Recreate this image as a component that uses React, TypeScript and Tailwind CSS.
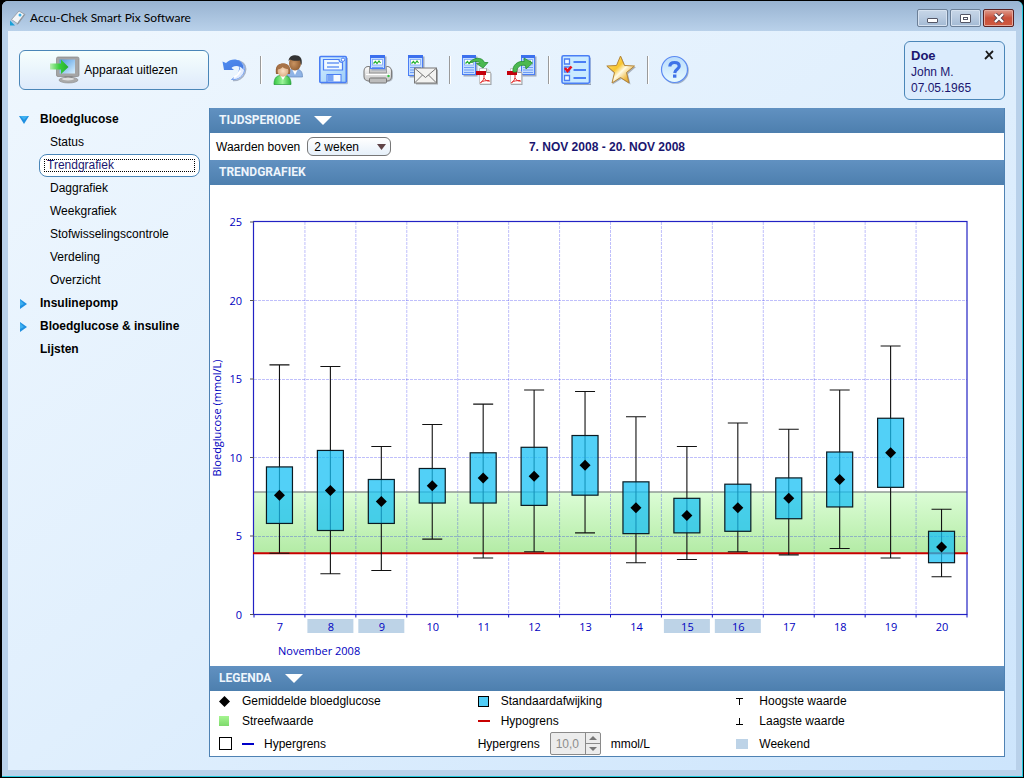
import React, { useState } from "react";

type Day = {
  day: number;
  mean: number;
  low: number;
  high: number;
  min: number;
  max: number;
  weekend?: boolean;
};

const days: Day[] = [
  { day: 7, mean: 7.6, low: 5.8, high: 9.4, min: 3.9, max: 15.9 },
  { day: 8, mean: 7.9, low: 5.35, high: 10.45, min: 2.6, max: 15.8, weekend: true },
  { day: 9, mean: 7.2, low: 5.8, high: 8.6, min: 2.8, max: 10.7, weekend: true },
  { day: 10, mean: 8.2, low: 7.1, high: 9.3, min: 4.8, max: 12.1 },
  { day: 11, mean: 8.7, low: 7.1, high: 10.3, min: 3.6, max: 13.4 },
  { day: 12, mean: 8.8, low: 6.95, high: 10.65, min: 4.0, max: 14.3 },
  { day: 13, mean: 9.5, low: 7.6, high: 11.4, min: 5.2, max: 14.2 },
  { day: 14, mean: 6.8, low: 5.15, high: 8.45, min: 3.3, max: 12.6 },
  { day: 15, mean: 6.3, low: 5.2, high: 7.4, min: 3.5, max: 10.7, weekend: true },
  { day: 16, mean: 6.8, low: 5.3, high: 8.3, min: 4.0, max: 12.2, weekend: true },
  { day: 17, mean: 7.4, low: 6.1, high: 8.7, min: 3.8, max: 11.8 },
  { day: 18, mean: 8.6, low: 6.85, high: 10.35, min: 4.2, max: 14.3 },
  { day: 19, mean: 10.3, low: 8.1, high: 12.5, min: 3.6, max: 17.1 },
  { day: 20, mean: 4.3, low: 3.3, high: 5.3, min: 2.4, max: 6.7 },
];

const reports = [
  "Status",
  "Trendgrafiek",
  "Daggrafiek",
  "Weekgrafiek",
  "Stofwisselingscontrole",
  "Verdeling",
  "Overzicht",
];

/* ---------- Chart ---------- */

const LEFT = 44;
const RIGHT = 757;
const BOTTOM = 428.5;
const STEP = (RIGHT - LEFT) / days.length;
const y = (v: number) => BOTTOM - v * 15.7;

function TrendChart() {
  return (
    <svg viewBox="0 0 794 480" className="block w-full" role="img" aria-label="Trendgrafiek">
      <defs>
        <linearGradient id="target" x1="0" y1="0" x2="0" y2="1">
          <stop offset="0" stopColor="#dcfdd6" />
          <stop offset="1" stopColor="#b3eba5" />
        </linearGradient>
      </defs>

      {/* Target range */}
      <rect x={LEFT} y={y(7.8)} width={RIGHT - LEFT} height={y(3.9) - y(7.8)} fill="url(#target)" />

      {/* Grid */}
      {[5, 10, 15, 20].map((v) => (
        <line key={v} x1={LEFT} x2={RIGHT} y1={Math.floor(y(v)) + 0.5} y2={Math.floor(y(v)) + 0.5} stroke="#0000f0" strokeOpacity="0.25" strokeDasharray="3 1" />
      ))}
      {days.slice(1).map((d, i) => (
        <line key={d.day} x1={LEFT + STEP * (i + 1)} x2={LEFT + STEP * (i + 1)} y1={y(25)} y2={BOTTOM} stroke="#0000f0" strokeOpacity="0.25" strokeDasharray="3 1" />
      ))}
      <line x1={LEFT} x2={RIGHT} y1={y(7.8)} y2={y(7.8)} stroke="#8f9a94" strokeWidth="1.4" />

      {/* Axes */}
      <rect x={LEFT - 0.5} y={y(25) - 0.5} width={RIGHT - LEFT + 0.5} height={BOTTOM - y(25) + 0.5} fill="none" stroke="#2222c4" strokeWidth="1.2" />
      {[0, 5, 10, 15, 20, 25].map((v) => (
        <g key={v}>
          <line x1={LEFT - 4} x2={LEFT} y1={y(v)} y2={y(v)} stroke="#555" />
          <text x="32" y={y(v) + 4} textAnchor="end" fontSize="11" fill="#0000c0">
            {v}
          </text>
        </g>
      ))}
      {days.concat(days[0]).map((_, i) => (
        <line key={i} x1={LEFT + STEP * i} x2={LEFT + STEP * i} y1={BOTTOM} y2={BOTTOM + 3} stroke="#1111c8" />
      ))}
      <line x1={LEFT - 1} x2={RIGHT + 1} y1={y(3.9)} y2={y(3.9)} stroke="#c80000" strokeWidth="2.2" />

      {/* Days */}
      {days.map((d, i) => {
        const cx = LEFT + STEP * (i + 0.5);
        return (
          <g key={d.day}>
            {d.weekend && <rect x={cx - 23} y="433" width="46" height="14" fill="#bdd3e7" />}
            <text x={cx + 0.5} y="445" textAnchor="middle" fontSize="11" fill="#0000c0">
              {d.day}
            </text>
            <path
              d={`M${cx} ${y(d.max)}V${y(d.min)}M${cx - 10} ${y(d.max)}h20M${cx - 10} ${y(d.min)}h20`}
              stroke="#111"
              strokeWidth="1.1"
              fill="none"
            />
            <rect x={cx - 13} y={y(d.high)} width="26" height={y(d.low) - y(d.high)} fill="#18c0f4" fillOpacity="0.75" stroke="#0a1a22" strokeWidth="1.2" />
            <path d={`M${cx} ${y(d.mean) - 5.5}l5.5 5.5l-5.5 5.5l-5.5 -5.5z`} fill="#000" />
          </g>
        );
      })}

      <text x="68" y="469" fontSize="11" fill="#0000c0">
        November 2008
      </text>
      <text x="-232" y="11" textAnchor="middle" fontSize="11" fill="#0000c0" transform="rotate(-90)">
        Bloedglucose (mmol/L)
      </text>
    </svg>
  );
}

/* ---------- Icons ---------- */

function Svg({ children }: { children: React.ReactNode }) {
  return (
    <svg viewBox="0 0 30 30" className="size-[30px]" aria-hidden="true">
      {children}
    </svg>
  );
}

const UndoIcon = () => (
  <Svg>
    <defs>
      <linearGradient id="undo" x1="0" y1="0" x2="1" y2="1">
        <stop offset="0" stopColor="#4f8df0" />
        <stop offset="1" stopColor="#4478e0" />
      </linearGradient>
    </defs>
    <path d="M20 6C26 8 28 13 26 18c-2 5-7 8-12 7.500" stroke="#a7b3c6" strokeWidth="1.500" fill="none" />
    <path d="M19 9c3 4 2 10-6.500 15.500c7 1 12.500-4 13-9.500c.3-4-2-7.500-6-9.500z" fill="#e3edff" stroke="#6b98ee" strokeWidth=".9" />
    <path d="M15 22.500c3-2 5-4 6.500-7" stroke="#fff" strokeWidth="2" fill="none" />
    <path d="M3.500 6.500L7 8C11 4 17 3.500 20.500 6c3 2 4.500 5 4 9c-2-3.500-7-5-11-3l-1 1l2.500 2L5 15z" fill="url(#undo)" />
  </Svg>
);

const UsersIcon = () => (
  <Svg>
    <defs>
      <radialGradient id="skinA" cx=".4" cy=".5" r=".7">
        <stop offset="0" stopColor="#c99361" />
        <stop offset="1" stopColor="#855329" />
      </radialGradient>
      <radialGradient id="skinB" cx=".5" cy=".5" r=".6">
        <stop offset="0" stopColor="#fbe0c4" />
        <stop offset="1" stopColor="#d7a377" />
      </radialGradient>
      <linearGradient id="shirt" x1="0" x2="1">
        <stop offset="0" stopColor="#35c740" />
        <stop offset=".5" stopColor="#9cf49a" />
        <stop offset="1" stopColor="#2db53a" />
      </linearGradient>
    </defs>
    <path d="M14 22c0-5 2-7.500 6-8h4c4 1 5.500 3 5.500 8z" fill="#8fb4e6" stroke="#6688bb" strokeWidth=".7" />
    <path d="M19 14l3 6l3-6z" fill="#fff" />
    <ellipse cx="22" cy="8.500" rx="6" ry="7" fill="url(#skinA)" />
    <path d="M15.500 6C16 2 18.500.3 22.500.3S30 3 28.500 10c-1-1.500-1-3-1.500-4.500c-3 .5-8 .5-10-1z" fill="#333" />
    <path d="M1 29.500c0-6 2-8.500 6-9h5c4 .5 6 3 6 9z" fill="url(#shirt)" stroke="#219a35" strokeWidth=".7" />
    <path d="M7 20l3 5l3-5z" fill="#fff" />
    <path d="M3 19c-1-7 1-10.500 7-10.500S18 12 17 19z" fill="#98633a" />
    <ellipse cx="10" cy="16" rx="5.500" ry="5.800" fill="url(#skinB)" />
    <path d="M4 14.500c0-4 2-6 6-6s6 2 6.500 5.500c-4 0-5-.5-7-2c-1 1.500-3 2.500-5.500 2.500z" fill="#a87347" />
  </Svg>
);

const SaveIcon = () => (
  <Svg>
    <defs>
      <linearGradient id="disk" x1="0" y1="0" x2="1" y2="1">
        <stop offset="0" stopColor="#d5efff" />
        <stop offset="1" stopColor="#9ccdf8" />
      </linearGradient>
    </defs>
    <path d="M3 28.700h26.300V3" stroke="#a5b3c4" fill="none" />
    <rect x="1.800" y="1.500" width="26.500" height="26" rx="1" fill="url(#disk)" stroke="#4a7ef5" strokeWidth="1.600" />
    <path d="M5.500 4.500h15.500c0 2 1.500 3 3.500 3v7.500h-19z" fill="#effaff" stroke="#4a7ef5" strokeWidth="1.200" />
    <circle cx="25" cy="4.700" r="1.700" fill="#fff" stroke="#4a7ef5" />
    <path d="M9 8h12M9 12h12" stroke="#6a98f5" strokeWidth="1.400" />
    <rect x="9" y="19.500" width="14" height="7.500" fill="#f6fbff" stroke="#4a7ef5" />
    <rect x="9.500" y="20" width="6" height="6.500" fill="#77a4f5" />
  </Svg>
);

/* Small report sheet reused in several toolbar icons */
function Sheet({ x, w, h }: { x: number; w: number; h: number }) {
  return (
    <g transform={`translate(${x} 0)`}>
      <rect x="1.500" y="1.500" width={w} height={h} fill="#9fabc0" />
      <rect x=".5" y=".5" width={w - 1} height={h - 1} fill="#c4ddff" stroke="#4a7ef5" />
      <path d={`M0 1.500H${w}`} stroke="#3c70ee" strokeWidth="3" />
      <rect x="2.500" y="4.500" width={w - 5} height="5.500" fill="#fff" stroke="#7aa6f7" strokeWidth=".8" />
      <path d="M3.500 8.500l2-2l1.500 2l2-2.500l1.500 2" stroke="#1fb12d" strokeWidth="1.200" fill="none" />
      <path d={`M2 12.500H${w - 2}`} stroke="#6e9df5" />
      {h > 16 && <path d={`M2 15H${w - 2}M2 17.500H${w - 2}`} stroke="#6e9df5" />}
    </g>
  );
}

const PrintIcon = () => (
  <Svg>
    <defs>
      <linearGradient id="printer" x1="0" y1="0" x2="0" y2="1">
        <stop offset="0" stopColor="#ffffff" />
        <stop offset="1" stopColor="#c6c6c6" />
      </linearGradient>
    </defs>
    <rect x="2" y="12.500" width="28" height="14.500" rx="5" fill="#8e959e" opacity=".6" />
    <rect x="1" y="11.500" width="27.500" height="14.500" rx="4.500" fill="url(#printer)" stroke="#7c7c7c" strokeWidth="1.100" />
    <rect x="6.500" y="11.500" width="17" height="6.500" fill="#c9c9c9" stroke="#888" strokeWidth=".8" />
    <Sheet x={7} w={15} h={14} />
    <rect x="6.500" y="23" width="17" height="5" rx="1" fill="#bcbcbc" stroke="#777" />
    <path d="M3 19.500h24" stroke="#fff" />
    <circle cx="25.500" cy="21" r="1.200" fill="#30c53e" />
  </Svg>
);

const MailIcon = () => (
  <Svg>
    <Sheet x={0} w={15} h={21} />
    <rect x="8" y="14.500" width="22" height="15" fill="#8d8d8d" opacity=".7" />
    <rect x="6.500" y="13" width="22" height="15" fill="#f3f3f1" stroke="#777" />
    <path d="M7 13.500l10.500 9L28 13.500M7 27.500l7.500-7.500M28 27.500l-7.500-7.500" stroke="#777" fill="none" />
  </Svg>
);

function PdfPage({ x }: { x: number }) {
  return (
    <g transform={`translate(${x} 0)`}>
      <path d="M4 14.500h7l4.500 4V30H4z" fill="#9aa0a8" />
      <path d="M3.500 13.500h7.500l3.500 3.500v12h-11z" fill="#fff" stroke="#bbb" strokeWidth=".8" />
      <path d="M10.500 13.500v4h4" fill="#ddd" stroke="#888" strokeWidth=".8" />
      <rect x="0" y="16" width="10" height="4" fill="#c4000c" />
      <path d="M8 20v2.500c-.5 3-2.500 5-4 5.500M8 23c1.500 2.500 3.500 3.500 6 3M5 27c2-1 5-1.500 8-1.500" stroke="#e22b2b" fill="none" />
    </g>
  );
}

const ExportPdfIcon = () => (
  <Svg>
    <Sheet x={0} w={14} h={20} />
    <PdfPage x={14} />
    <path d="M7 8.500C11 2 20 1.500 22.500 7.500H26l-5 5.500l-6.500-4.500h3.500C17 6 12 5.500 7 8.500z" fill="#4cb950" stroke="#278d33" strokeWidth=".8" />
  </Svg>
);

const ImportPdfIcon = () => (
  <Svg>
    <Sheet x={14} w={14} h={20} />
    <PdfPage x={0} />
    <path d="M6 17C5 10 11 5.500 17.500 6.500L17 3l8.500 5L19 14l-.500-3.500C13 9.500 10 12 9.500 17z" fill="#4cb950" stroke="#278d33" strokeWidth=".8" />
  </Svg>
);

const ListIcon = () => (
  <Svg>
    <path d="M3 29.500h27V3" stroke="#96a5b8" fill="none" strokeWidth="1.200" />
    <rect x="1" y=".8" width="27.500" height="27.500" rx="1.500" fill="#c9eaff" stroke="#4a7ef5" strokeWidth="1.600" />
    <path d="M3.500 4h5v5h-5zM3.500 12h5v5h-5zM3.500 20.500h5v5h-5z" fill="#eefaff" stroke="#4a7ef5" strokeWidth="1.300" />
    <path d="M12.500 7h12.500M12.500 15h12.500M12.500 23h12.500" stroke="#4a7ef5" strokeWidth="1.800" />
    <path d="M4 13l2.500 3L10.500 11.500" stroke="#e8101c" strokeWidth="2.600" fill="none" />
  </Svg>
);

const StarIcon = () => (
  <Svg>
    <defs>
      <linearGradient id="gold" x1="0" y1="0" x2="1" y2="1">
        <stop offset=".1" stopColor="#ffe27a" />
        <stop offset=".4" stopColor="#f8c52e" />
        <stop offset=".55" stopColor="#fffbe6" />
        <stop offset=".75" stopColor="#f0bd4b" />
        <stop offset="1" stopColor="#c98c22" />
      </linearGradient>
    </defs>
    <path d="M15.500 2l4 9.500l10.500.500l-8 7l2.500 10.500l-9-5.500l-9 5.500L9 19l-8-7l10.500-.5z" fill="#7d828c" opacity=".6" />
    <path d="M14.500 1l4 9.500l10 .500l-8 6.500L23 28l-8.500-5.500L6 28l2.500-10.500L.8 11l9.700-.5z" fill="url(#gold)" stroke="#b48538" strokeLinejoin="round" />
  </Svg>
);

const HelpIcon = () => (
  <Svg>
    <defs>
      <linearGradient id="bubble" x1="0" y1="0" x2="0" y2="1">
        <stop offset="0" stopColor="#b9dcfb" />
        <stop offset="1" stopColor="#e9fbff" />
      </linearGradient>
    </defs>
    <circle cx="15.500" cy="15.500" r="13.300" fill="#8295b0" opacity=".7" />
    <circle cx="14.500" cy="14.500" r="13" fill="url(#bubble)" stroke="#5b8af2" strokeWidth="1.200" />
    <path d="M9.800 11.500c.2-2.600 2-4 4.700-4s4.700 1.300 4.700 3.700c0 3-4.200 3.200-4.500 6.800" stroke="#3f73e8" strokeWidth="3.200" fill="none" />
    <rect x="13" y="19.500" width="3.400" height="3.200" fill="#3f73e8" />
  </Svg>
);

const DeviceIcon = () => (
  <svg viewBox="0 0 30 28" className="h-7 w-[30px]" aria-hidden="true">
    <defs>
      <linearGradient id="screen" x1="0" y1="0" x2="1" y2="1">
        <stop offset="0" stopColor="#4c97e0" />
        <stop offset="1" stopColor="#d9f1ff" />
      </linearGradient>
      <linearGradient id="arrow" x1="0" x2="1">
        <stop offset="0" stopColor="#b5efb0" />
        <stop offset=".5" stopColor="#39cf3d" />
        <stop offset="1" stopColor="#27ad2f" />
      </linearGradient>
    </defs>
    <ellipse cx="18.500" cy="24" rx="9.500" ry="3" fill="#aaa" stroke="#888" strokeWidth=".6" />
    <rect x="14.500" y="19" width="8" height="4.500" fill="#858585" />
    <ellipse cx="18" cy="23" rx="6" ry="1.500" fill="#dedede" />
    <rect x="6.500" y="1" width="22.500" height="19.500" rx="1.500" fill="#a5a5a5" stroke="#858585" strokeWidth=".7" />
    <rect x="9.500" y="3.500" width="15.500" height="14" fill="url(#screen)" />
    <path d="M0 7.500h11V3.500l7.500 7.500L11 18v-4.500H0z" fill="url(#arrow)" />
  </svg>
);

const AppIcon = () => (
  <svg viewBox="0 0 16 16" className="size-4" aria-hidden="true">
    <path d="M1.500 9.500l7.500-8.500l6 3.500l-7 9.500z" fill="#f4f6f8" stroke="#8d949c" strokeWidth=".8" />
    <path d="M15 4.500l-7 9.500l-1.500 1L8 12l6-8z" fill="#8c949d" />
    <circle cx="10" cy="5" r="1.500" fill="#38aee8" />
    <path d="M0 10.500l5 5H0z" fill="#18a0d8" />
  </svg>
);

function Separator() {
  return <div className="mx-[11px] h-7 w-0.5 border-l border-[#9a9a9a] bg-white" />;
}

function ToolButton({ label, children }: { label: string; children: React.ReactNode }) {
  return (
    <button type="button" aria-label={label} className="block size-[30px] shrink-0">
      {children}
    </button>
  );
}

function SectionHeader({ title, arrow }: { title: string; arrow?: boolean }) {
  return (
    <h2 className="flex items-center gap-3.5 bg-gradient-to-b from-[#6191c1] to-[#4d7fae] pl-[9px] font-[Roboto,sans-serif] text-xs leading-[25px] font-bold text-[#eef5fc]">
      {title}
      {arrow && (
        <svg viewBox="0 0 18 9" className="h-[9px] w-[18px]" aria-hidden="true">
          <path d="M0 0h18L9 9z" fill="#fff" />
        </svg>
      )}
    </h2>
  );
}

function WindowControls() {
  return (
    <div className="flex gap-0.5">
      <button type="button" aria-label="Minimaliseren" className="flex h-[18px] w-[31px] items-center justify-center rounded-xs border border-[#6b7f97] bg-gradient-to-b from-[#c7d6e8] via-[#b9cbe0] via-45% to-[#a3bad4] shadow-[inset_0_0_0_1px_#d6e2f0]">
        <span className="mt-1 h-[5px] w-[11px] rounded-[1px] border border-[#535666] bg-white" />
      </button>
      <button type="button" aria-label="Maximaliseren" className="flex h-[18px] w-[31px] items-center justify-center rounded-xs border border-[#6b7f97] bg-gradient-to-b from-[#c7d6e8] via-[#b9cbe0] via-45% to-[#a3bad4] shadow-[inset_0_0_0_1px_#d6e2f0]">
        <span className="flex h-[9px] w-[11px] items-center justify-center rounded-[1px] border border-[#535666] bg-white">
          <span className="h-[3px] w-[5px] border border-[#535666]" />
        </span>
      </button>
      <button type="button" aria-label="Sluiten" className="flex h-[18px] w-[31px] items-center justify-center rounded-xs border border-[#5a2121] bg-gradient-to-b from-[#dd9a8c] via-[#c9503a] via-50% to-[#cf5a40] shadow-[inset_0_0_0_1px_#e5a99c]">
        <svg viewBox="0 0 12 10" className="h-2.5 w-3" aria-hidden="true">
          <path d="M2 1l8 8M10 1l-8 8" stroke="#5a4048" strokeWidth="4" />
          <path d="M2 1l8 8M10 1l-8 8" stroke="#fff" strokeWidth="2.400" />
        </svg>
      </button>
    </div>
  );
}

function NavArrow({ open }: { open?: boolean }) {
  return (
    <svg viewBox="0 0 10 10" className="size-2.5" aria-hidden="true">
      <path d={open ? "M0 1h10L5 9z" : "M1 0l7 5l-7 5z"} fill="#1f8fe0" />
      <path d={open ? "M1 1h8L5 5z" : "M1 1l4 4l-4 2z"} fill="#3fb0f0" />
    </svg>
  );
}

function Sidebar() {
  const [active, setActive] = useState("Trendgrafiek");
  return (
    <nav className="w-[190px] shrink-0 leading-[23px]">
      <button type="button" className="flex w-full items-center gap-[11px] font-bold">
        <NavArrow open />
        Bloedglucose
      </button>
      <ul className="pl-5">
        {reports.map((name) => (
          <li key={name}>
            {name === active ? (
              <button type="button" className="flex h-[23px] w-[161px] items-center rounded-lg border border-[#4a86b8] bg-white px-1 text-left text-[#1a1670]">
                <span className="w-full border border-dotted border-black pl-0.5 leading-[11px]">{name}</span>
              </button>
            ) : (
              <button type="button" onClick={() => setActive(name)} className="block pl-[11px] text-left">
                {name}
              </button>
            )}
          </li>
        ))}
      </ul>
      <button type="button" className="flex w-full items-center gap-[11px] font-bold">
        <NavArrow />
        Insulinepomp
      </button>
      <button type="button" className="flex w-full items-center gap-[11px] font-bold">
        <NavArrow />
        Bloedglucose &amp; insuline
      </button>
      <button type="button" className="block pl-[21px] font-bold">
        Lijsten
      </button>
    </nav>
  );
}

function LegendItem({ label, children }: { label: string; children: React.ReactNode }) {
  return (
    <div className="flex items-center">
      <span className="flex w-[23px] shrink-0 items-center">{children}</span>
      {label}
    </div>
  );
}

function Legend() {
  return (
    <div className="grid grid-cols-3 grid-rows-[20px_20px_25px] px-[9px]">
      <LegendItem label="Gemiddelde bloedglucose">
        <svg viewBox="0 0 11 11" className="size-[11px]" aria-hidden="true">
          <path d="M5.500 0L11 5.500L5.500 11L0 5.500z" />
        </svg>
      </LegendItem>
      <LegendItem label="Standaardafwijking">
        <span className="size-[11px] border border-black bg-[#51cdf6]" />
      </LegendItem>
      <LegendItem label="Hoogste waarde">
        <svg viewBox="0 0 7 7" className="size-[7px]" aria-hidden="true">
          <path d="M0 .5h7M3.500 0v7" stroke="#000" />
        </svg>
      </LegendItem>

      <LegendItem label="Streefwaarde">
        <span className="size-2.5 bg-gradient-to-b from-[#a5f590] to-[#7ed96c]" />
      </LegendItem>
      <LegendItem label="Hypogrens">
        <span className="h-0.5 w-3 bg-[#c80000]" />
      </LegendItem>
      <LegendItem label="Laagste waarde">
        <svg viewBox="0 0 7 7" className="size-[7px]" aria-hidden="true">
          <path d="M0 6.500h7M3.500 0v7" stroke="#000" />
        </svg>
      </LegendItem>

      <label className="flex items-center">
        <input type="checkbox" className="size-[13px] appearance-none border border-black bg-white checked:bg-black" />
        <span className="mr-2.5 ml-2.5 h-0.5 w-3 bg-[#0000c8]" />
        Hypergrens
      </label>
      <div className="flex items-center">
        <label htmlFor="hyper">Hypergrens</label>
        <div className="mx-2.5 flex h-[23px] w-[51px] overflow-hidden rounded-xs border border-[#8a8a8a] bg-[#ececec]">
          <input id="hyper" type="text" disabled defaultValue="10,0" className="w-[34px] bg-transparent pl-[5px] text-[#8c8c8c]" />
          <div className="flex flex-1 flex-col border-l border-[#8a8a8a]">
            <button type="button" disabled aria-label="Omhoog" className="flex flex-1 items-center justify-center border-b border-[#8a8a8a]">
              <svg viewBox="0 0 8 4" className="h-1 w-2" aria-hidden="true">
                <path d="M0 4h8L4 0z" fill="#777" />
              </svg>
            </button>
            <button type="button" disabled aria-label="Omlaag" className="flex flex-1 items-center justify-center">
              <svg viewBox="0 0 8 4" className="h-1 w-2" aria-hidden="true">
                <path d="M0 0h8L4 4z" fill="#777" />
              </svg>
            </button>
          </div>
        </div>
        mmol/L
      </div>
      <LegendItem label="Weekend">
        <span className="h-2.5 w-3 bg-[#bdd3e7]" />
      </LegendItem>
    </div>
  );
}

export default function App() {
  return (
    <div className="flex min-h-screen flex-col bg-black pt-px pr-px pb-px pl-0.5 font-['Liberation_Sans',Arial,sans-serif] text-xs text-black">
      <div className="flex flex-1 flex-col rounded-t-md border-r border-b border-[#20c8dc] bg-[#b9d1ea] pr-1.5 pb-1.5 pl-1.5">
        <header className="-mx-1.5 flex h-[30px] items-center gap-1 rounded-t-md bg-gradient-to-b from-[#98b3d1] to-[#b9d1ea] px-2 pt-1">
          <AppIcon />
          <h1 className="flex-1 font-[Lato,sans-serif] text-xs">Accu-Chek Smart Pix Software</h1>
          <WindowControls />
        </header>

        <main className="flex-1 bg-gradient-to-br from-[#eff7fe] via-[#e0effd] to-[#cde5fc] px-[11px] pb-[13px]">
          {/* Toolbar */}
          <div className="flex h-[77px] items-center pt-px">
            <button type="button" className="flex h-10 w-[190px] items-center justify-center gap-1 rounded-md border border-[#4a86b8] bg-gradient-to-b from-[#f6fffd] to-[#deeafb]">
              <DeviceIcon />
              Apparaat uitlezen
            </button>
            <div className="ml-2.5 flex items-center">
              <ToolButton label="Vernieuwen"><UndoIcon /></ToolButton>
              <Separator />
              <div className="flex gap-[15px]">
                <ToolButton label="Patiënten"><UsersIcon /></ToolButton>
                <ToolButton label="Opslaan"><SaveIcon /></ToolButton>
                <ToolButton label="Afdrukken"><PrintIcon /></ToolButton>
                <ToolButton label="E-mail"><MailIcon /></ToolButton>
              </div>
              <Separator />
              <div className="flex gap-[15px]">
                <ToolButton label="PDF exporteren"><ExportPdfIcon /></ToolButton>
                <ToolButton label="PDF importeren"><ImportPdfIcon /></ToolButton>
              </div>
              <Separator />
              <div className="flex gap-[15px]">
                <ToolButton label="Instellingen"><ListIcon /></ToolButton>
                <ToolButton label="Favorieten"><StarIcon /></ToolButton>
              </div>
              <Separator />
              <ToolButton label="Help"><HelpIcon /></ToolButton>
            </div>
            <div className="ml-auto flex h-[59px] w-[101px] justify-between rounded-md border border-[#4a86b8] bg-[#dbecfd] pt-1.5 pr-2.5 pl-1.5 leading-4 text-[#1a1670]">
              <div>
                <div className="text-[13px] leading-4 font-bold">Doe</div>
                <div>John M.</div>
                <div>07.05.1965</div>
              </div>
              <button type="button" aria-label="Patiënt sluiten" className="mt-0.5 size-2.5">
                <svg viewBox="0 0 10 10" className="size-2.5" aria-hidden="true">
                  <path d="M2 1l6.500 8M9 1L1 9" stroke="#1a1a1a" strokeWidth="1.800" />
                </svg>
              </button>
            </div>
          </div>

          <div className="flex items-start">
            <Sidebar />
            <section className="min-w-0 flex-1 border-x border-b border-[#4f82b3] bg-white">
              <SectionHeader title="TIJDSPERIODE" arrow />
              <div className="grid h-[27px] grid-cols-3 items-center">
                <div className="flex items-center gap-[7px] pl-1.5">
                  <label htmlFor="period">Waarden boven</label>
                  <div className="relative">
                    <select id="period" defaultValue="2 weken" className="block h-[19px] w-[84px] appearance-none rounded-md border border-[#777] bg-gradient-to-b from-white to-[#e6f0fa] pl-1.5">
                      <option>1 week</option>
                      <option>2 weken</option>
                      <option>4 weken</option>
                    </select>
                    <svg viewBox="0 0 9 6" className="pointer-events-none absolute top-[7px] right-[5px] h-1.5 w-[9px]" aria-hidden="true">
                      <path d="M0 0h9L4.500 6z" fill="#5f4347" />
                    </svg>
                  </div>
                </div>
                <strong className="text-center text-[#1a1670]">7. NOV 2008 - 20. NOV 2008</strong>
              </div>
              <SectionHeader title="TRENDGRAFIEK" />
              <div className="pt-px font-['Open_Sans',sans-serif]">
                <TrendChart />
              </div>
              <SectionHeader title="LEGENDA" arrow />
              <Legend />
            </section>
          </div>
        </main>
      </div>
    </div>
  );
}
